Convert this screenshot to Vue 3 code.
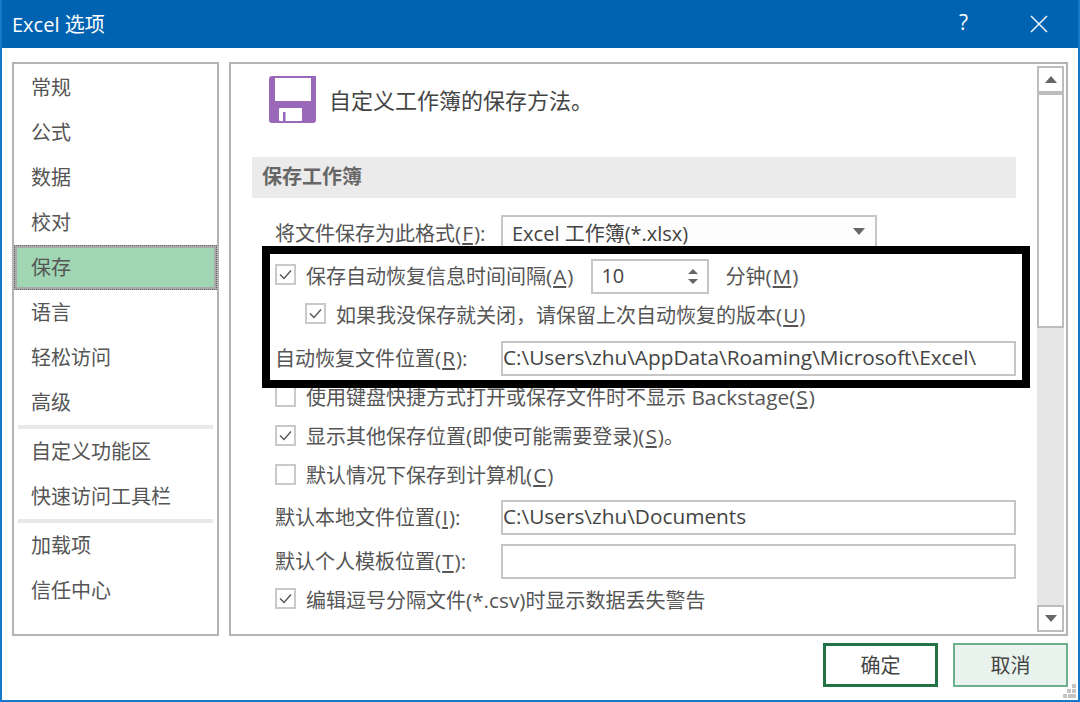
<script setup>
const navGroups = [
  ["常规", "公式", "数据", "校对", "保存", "语言", "轻松访问", "高级"],
  ["自定义功能区", "快速访问工具栏"],
  ["加载项", "信任中心"],
];
</script>

<template>
  <div class="window">
    <header class="titlebar">
      <span class="title">Excel 选项</span>
      <span class="help">?</span>
      <svg class="close" width="18" height="18" viewBox="0 0 18 18">
        <path d="M1 1L17 17M17 1L1 17" stroke="#fff" stroke-width="1.4" fill="none" />
      </svg>
    </header>

    <div class="body">
      <div class="panels">
        <nav class="sidebar">
          <template v-for="(group, g) in navGroups" :key="g">
            <div v-if="g > 0" class="nav-sep"></div>
            <div
              v-for="item in group"
              :key="item"
              class="nav-item"
              :class="{ active: item === '保存' }"
            >
              <span class="nav-label">{{ item }}</span>
            </div>
          </template>
        </nav>

        <section class="main">
          <div class="content">
            <div class="heading">
              <svg class="floppy" width="47" height="47" viewBox="0 0 47 47">
                <path d="M3 0H47V44a3 3 0 0 1-3 3H3a3 3 0 0 1-3-3V3a3 3 0 0 1 3-3z" fill="#9a68b8" />
                <rect x="6" y="2" width="36" height="23" fill="#fff" />
                <rect x="10" y="32" width="23" height="13" rx="1" fill="#fff" />
                <rect x="14" y="36" width="2.5" height="9" fill="#9a68b8" />
              </svg>
              <span class="heading-text">自定义工作簿的保存方法。</span>
            </div>

            <div class="section-bar"><span>保存工作簿</span></div>

            <div class="row row-format">
              <label class="field-label">将文件保存为此格式<span class="lat">(<u>F</u>):</span></label>
              <div class="select">
                <span class="val">Excel 工作簿(*.xlsx)</span>
                <span class="select-arrow"></span>
              </div>
            </div>

            <div class="row row-auto">
              <span class="check">
                <svg width="17" height="17" viewBox="0 0 17 17"><path d="M3 8.5L7 12.5L14 4.5" stroke="#555" stroke-width="1.4" fill="none" /></svg>
              </span>
              <span class="check-text">保存自动恢复信息时间间隔<span class="lat">(<u>A</u>)</span></span>
              <div class="spinner">
                <span class="val">10</span>
                <span class="spin-arrows"><i class="up"></i><i class="down"></i></span>
              </div>
              <span class="minutes">分钟<span class="lat">(<u>M</u>)</span></span>
            </div>

            <div class="row row-keep">
              <span class="check">
                <svg width="17" height="17" viewBox="0 0 17 17"><path d="M3 8.5L7 12.5L14 4.5" stroke="#555" stroke-width="1.4" fill="none" /></svg>
              </span>
              <span class="check-text">如果我没保存就关闭，请保留上次自动恢复的版本<span class="lat">(<u>U</u>)</span></span>
            </div>

            <div class="row row-path">
              <label class="field-label">自动恢复文件位置<span class="lat">(<u>R</u>):</span></label>
              <div class="textbox"><span class="lat val">C:\Users\zhu\AppData\Roaming\Microsoft\Excel\</span></div>
            </div>

            <div class="row row-check row-first">
              <span class="check"></span>
              <span class="check-text">使用键盘快捷方式打开或保存文件时不显示<span class="lat"> Backstage(<u>S</u>)</span></span>
            </div>
            <div class="row row-check">
              <span class="check">
                <svg width="17" height="17" viewBox="0 0 17 17"><path d="M3 8.5L7 12.5L14 4.5" stroke="#555" stroke-width="1.4" fill="none" /></svg>
              </span>
              <span class="check-text">显示其他保存位置<span class="lat">(</span>即使可能需要登录<span class="lat">)(<u>S</u>)</span>。</span>
            </div>
            <div class="row row-check">
              <span class="check"></span>
              <span class="check-text">默认情况下保存到计算机<span class="lat">(<u>C</u>)</span></span>
            </div>

            <div class="row row-local">
              <label class="field-label">默认本地文件位置<span class="lat">(<u>I</u>):</span></label>
              <div class="textbox"><span class="lat val">C:\Users\zhu\Documents</span></div>
            </div>
            <div class="row row-template">
              <label class="field-label">默认个人模板位置<span class="lat">(<u>T</u>):</span></label>
              <div class="textbox"></div>
            </div>
            <div class="row row-csv">
              <span class="check">
                <svg width="17" height="17" viewBox="0 0 17 17"><path d="M3 8.5L7 12.5L14 4.5" stroke="#555" stroke-width="1.4" fill="none" /></svg>
              </span>
              <span class="check-text">编辑逗号分隔文件<span class="lat">(*.csv)</span>时显示数据丢失警告</span>
            </div>
          </div>

          <div class="scrollbar">
            <div class="scroll-btn"><i class="tri up"></i></div>
            <div class="scroll-thumb"></div>
            <div class="scroll-track"></div>
            <div class="scroll-btn"><i class="tri down"></i></div>
          </div>

          <!-- black annotation frame drawn over the dialog -->
          <div class="highlight"></div>
        </section>
      </div>

      <footer class="actions">
        <button type="button" class="btn btn-ok">确定</button>
        <button type="button" class="btn btn-cancel">取消</button>
      </footer>

      <svg class="grip" width="14" height="14" viewBox="0 0 14 14" fill="#c4c4c4">
        <rect x="9" y="0" width="4" height="4" />
        <rect x="4" y="5" width="4" height="4" />
        <rect x="9" y="5" width="4" height="4" />
        <rect x="0" y="10" width="4" height="4" />
        <rect x="5" y="10" width="4" height="4" />
        <rect x="9" y="10" width="4" height="4" />
      </svg>
    </div>
  </div>
</template>

<style>
html,
body {
  margin: 0;
  background: #fff;
}
</style>

<style scoped>
.window {
  width: 1080px;
  height: 702px;
  box-sizing: border-box;
  display: flex;
  flex-direction: column;
  background: #fff;
  border: 2px solid #1479c9;
  border-top: none;
  font-family: "Open Sans", "Noto Sans CJK SC", sans-serif;
  font-size: 20px;
  color: #555;
  overflow: hidden;
}
.titlebar {
  height: 48px;
  flex: none;
  display: flex;
  align-items: center;
  background: #0063b1;
  color: #fff;
  padding-left: 12px;
  margin: 0 -2px;
  padding-right: 32px;
}
.title {
  flex: 1;
  font-size: 20px;
  margin-top: -2px;
}
.help {
  font-size: 21px;
  margin-right: 62px;
  margin-top: -4px;
}
.close {
  margin-top: -1px;
}

/* latin runs are a touch wider than the cjk size in the original */
.lat {
  font-size: 20.8px;
}
.lat u {
  margin: 0 1px;
}
.val,
.nav-label,
.check-text,
.field-label,
.minutes {
  position: relative;
  top: -1px;
}

.body {
  flex: 1;
  position: relative;
  display: flex;
  flex-direction: column;
  padding: 14px 10px 0;
}
.panels {
  display: flex;
  gap: 10px;
  height: 574px;
}

.sidebar {
  width: 207px;
  box-sizing: border-box;
  border: 2px solid #b4b4b4;
  padding-top: 1px;
  display: flex;
  flex-direction: column;
}
.nav-item {
  height: 45px;
  flex: none;
  display: flex;
  align-items: center;
  padding-left: 17px;
  box-sizing: border-box;
}
.nav-item.active {
  background: #a0d6b4;
  border: 3px solid #a9a9a9;
  outline: 1px dotted #666;
  outline-offset: -1px;
  padding-left: 14px;
}
.nav-label {
  top: -1.5px;
}
.nav-sep {
  height: 4px;
  flex: none;
  margin: 0 4px;
  background: #e8e8e8;
}

.main {
  flex: 1;
  box-sizing: border-box;
  position: relative;
  border: 2px solid #b4b4b4;
  display: flex;
  overflow: hidden;
}
.content {
  flex: 1;
  padding: 12px 21px 0;
  color: #555;
}
.heading {
  display: flex;
  align-items: center;
  padding-left: 17px;
  gap: 13px;
  height: 47px;
}
.heading-text {
  color: #444;
  font-size: 22px;
  margin-top: -1px;
}
.section-bar {
  margin-top: 34px;
  height: 41px;
  padding-left: 10px;
  display: flex;
  align-items: center;
  background: #ebebeb;
  font-weight: 700;
  font-size: 20px;
  color: #666;
}
.section-bar span {
  position: relative;
  top: -2px;
}

.row {
  display: flex;
  align-items: center;
  height: 36px;
  padding-left: 23px;
  white-space: nowrap;
}
.row-format {
  margin-top: 17px;
}
.row-auto {
  margin-top: 7px;
}
.row-keep {
  margin-top: 3px;
  padding-left: 53px;
}
.row-path {
  margin-top: 7px;
}
.row-check {
  height: 39px;
}
.row-first {
  margin-top: 2px;
}
.row-local {
  margin-top: 4px;
}
.row-template {
  margin-top: 8px;
}
.row-csv {
  margin-top: 3px;
}

.field-label {
  width: 226px;
  flex: none;
}
.select {
  width: 376px;
  height: 36px;
  box-sizing: border-box;
  border: 2px solid #c6c6c6;
  background: #fdfdfd;
  display: flex;
  align-items: center;
  justify-content: space-between;
  padding: 0 10px 0 9px;
  color: #444;
}
.select-arrow {
  width: 0;
  height: 0;
  border-left: 6px solid transparent;
  border-right: 6px solid transparent;
  border-top: 7px solid #666;
  margin-top: -3px;
}
.textbox {
  width: 515px;
  height: 35px;
  box-sizing: border-box;
  border: 2px solid #c6c6c6;
  display: flex;
  align-items: center;
  padding-left: 0;
  color: #444;
}

.check {
  width: 21px;
  height: 21px;
  flex: none;
  box-sizing: border-box;
  border: 2px solid #c9c9c9;
  display: flex;
  align-items: center;
  justify-content: center;
  margin-top: -3px;
  margin-right: 10px;
  background: #fff;
}
.check-text {
  color: #555;
}

.spinner {
  width: 118px;
  height: 35px;
  box-sizing: border-box;
  margin-left: 18px;
  border: 2px solid #c6c6c6;
  display: flex;
  align-items: center;
  justify-content: space-between;
  padding: 0 9px 0 8px;
  color: #444;
}
.spin-arrows {
  display: flex;
  flex-direction: column;
  gap: 5px;
}
.spin-arrows i {
  display: block;
  width: 0;
  height: 0;
  border-left: 5px solid transparent;
  border-right: 5px solid transparent;
}
.spin-arrows .up {
  border-bottom: 5px solid #666;
}
.spin-arrows .down {
  border-top: 5px solid #666;
}
.minutes {
  margin-left: 16px;
}

.scrollbar {
  width: 27px;
  flex: none;
  margin: 2px 2px 2px 0;
  display: flex;
  flex-direction: column;
  background: #e6e6e6;
}
.scroll-btn,
.scroll-thumb {
  box-sizing: border-box;
  border: 2px solid #bdbdbd;
  background: #fff;
}
.scroll-btn {
  height: 27px;
  flex: none;
  display: flex;
  align-items: center;
  justify-content: center;
}
.scroll-thumb {
  height: 235px;
  flex: none;
}
.scroll-track {
  flex: 1;
}
.tri {
  width: 0;
  height: 0;
  border-left: 6px solid transparent;
  border-right: 6px solid transparent;
}
.tri.up {
  border-bottom: 7px solid #666;
}
.tri.down {
  border-top: 7px solid #666;
}

.highlight {
  position: absolute;
  left: 31px;
  top: 182px;
  width: 768px;
  height: 142px;
  box-sizing: border-box;
  border: 8px solid #000;
  pointer-events: none;
}

.actions {
  display: flex;
  justify-content: flex-end;
  gap: 15px;
  margin-top: 7px;
}
.btn {
  width: 115px;
  height: 44px;
  box-sizing: border-box;
  padding: 0 0 2px;
  font-family: "Open Sans", "Noto Sans CJK SC", sans-serif;
  font-size: 20px;
  color: #444;
  cursor: pointer;
}
.btn-ok {
  background: #fff;
  border: 3px solid #217346;
}
.btn-cancel {
  background: #e9f3ee;
  border: 2px solid #6eb08c;
}
.grip {
  position: absolute;
  right: 1px;
  bottom: 2px;
}
</style>
